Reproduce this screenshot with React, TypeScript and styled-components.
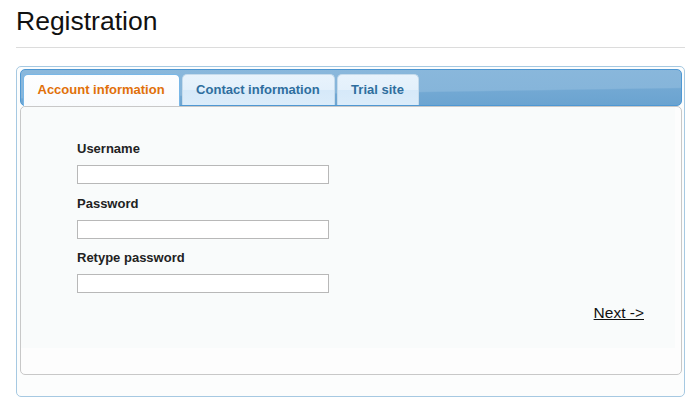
import React from 'react';
import styled, { createGlobalStyle } from 'styled-components';

const Global = createGlobalStyle`
  html, body { margin: 0; padding: 0; background: #ffffff; }
  body { font-family: "Liberation Sans", Arial, sans-serif; }
  * { box-sizing: border-box; }
`;

const Page = styled.div`
  padding: 6px 15px 0 16px;
`;

const Title = styled.h1`
  margin: 0;
  font-size: 26.5px;
  line-height: 30px;
  font-weight: normal;
  color: #111111;
`;

const Rule = styled.hr`
  margin: 11px 0 0 0;
  border: 0;
  border-top: 1px solid #dcdcdc;
  height: 0;
`;

const TabsBox = styled.div`
  margin-top: 18px;
  border: 1px solid #a6c9e2;
  border-radius: 5px;
  background: #fcfdfd;
  padding: 2px 2px 21px 3px;
`;

const TabBar = styled.ul`
  margin: 0;
  display: flex;
  align-items: flex-start;
  padding: 4px 0 0 2px;
  border: 1px solid #4f98d3;
  border-radius: 5px;
  background: linear-gradient(
    179.1deg,
    #8ab8dc 0%,
    #86b5da 61%,
    #72a8d3 64%,
    #6aa3d0 100%
  );
`;

const Tab = styled.li<{ $active?: boolean }>`
  list-style: none;
  margin: 0 2px ${p => (p.$active ? '-1px' : '0')} 0;
  border: 1px solid ${p => (p.$active ? '#79b7e7' : '#c5dbec')};
  border-bottom: 0;
  border-radius: 5px 5px 0 0;
  padding: 6px 14px ${p => (p.$active ? '8px' : '7px')} 13.5px;
  line-height: 17px;
  font-size: 13px;
  font-weight: bold;
  white-space: nowrap;
  cursor: pointer;
  color: ${p => (p.$active ? '#e17009' : '#2e6e9e')};
  background: ${p =>
    p.$active
      ? 'linear-gradient(to bottom, #fdfeff 0%, #f9fbfd 100%)'
      : 'linear-gradient(to bottom, #e8f3fc 0%, #e3f0fb 50%, #d6e9f9 51%, #dbecfa 100%)'};
`;

const Panel = styled.div`
  border: 1px solid #c8c8c8;
  border-radius: 5px;
  background: #fdfdfd;
  padding: 0 0 26px 0;
`;

const Form = styled.form`
  margin: 0 6px 0 0;
  background: #f9fbfb;
  padding: 34px 31px 26px 56px;
  display: flex;
  flex-direction: column;
  border-radius: 5px 0 0 0;
`;

const Field = styled.div`
  display: flex;
  flex-direction: column;
  align-items: flex-start;
  & + & {
    margin-top: 11.5px;
  }
`;

const Label = styled.label`
  font-size: 13px;
  line-height: 16px;
  font-weight: bold;
  color: #222222;
  margin-bottom: 8px;
`;

const Input = styled.input`
  width: 252px;
  height: 19px;
  margin: 0;
  padding: 1px 3px;
  border: 1px solid #b8b8b8;
  background: #ffffff;
  font-family: "Liberation Sans", Arial, sans-serif;
  font-size: 13px;
  outline: none;
`;

const Actions = styled.div`
  display: flex;
  justify-content: flex-end;
  margin-top: 11px;
`;

const NextLink = styled.a`
  font-size: 15.5px;
  line-height: 18px;
  color: #111111;
  text-decoration: underline;
  cursor: pointer;
`;

export default function App() {
  return (
    <>
      <Global />
      <Page>
        <Title>Registration</Title>
        <Rule />
        <TabsBox>
          <TabBar>
            <Tab $active>Account information</Tab>
            <Tab>Contact information</Tab>
            <Tab>Trial site</Tab>
          </TabBar>
          <Panel>
            <Form onSubmit={e => e.preventDefault()}>
              <Field>
                <Label htmlFor="username">Username</Label>
                <Input id="username" type="text" />
              </Field>
              <Field>
                <Label htmlFor="password">Password</Label>
                <Input id="password" type="password" />
              </Field>
              <Field>
                <Label htmlFor="password2">Retype password</Label>
                <Input id="password2" type="password" />
              </Field>
              <Actions>
                <NextLink>Next -&gt;</NextLink>
              </Actions>
            </Form>
          </Panel>
        </TabsBox>
      </Page>
    </>
  );
}
